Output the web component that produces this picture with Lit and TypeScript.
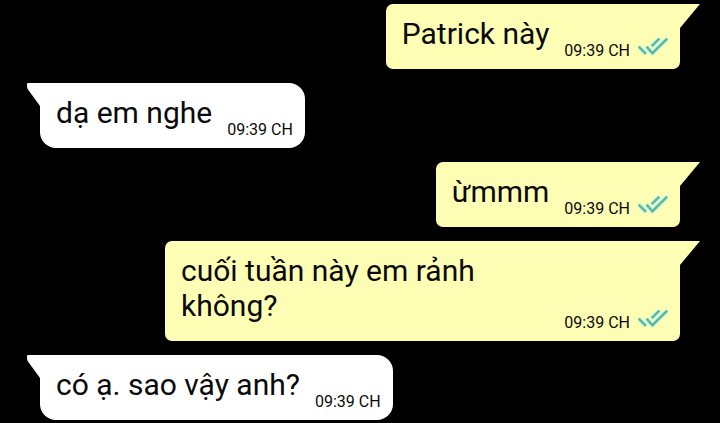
import { LitElement, html, css, nothing } from "lit";
import { customElement, property } from "lit/decorators.js";

interface Message {
  text: string;
  time: string;
  sent: boolean;
}

const messages: Message[] = [
  { text: "Patrick này", time: "09:39 CH", sent: true },
  { text: "dạ em nghe", time: "09:39 CH", sent: false },
  { text: "ừmmm", time: "09:39 CH", sent: true },
  { text: "cuối tuần này em rảnh không?", time: "09:39 CH", sent: true },
  { text: "có ạ. sao vậy anh?", time: "09:39 CH", sent: false },
];

@customElement("chat-bubble")
export class ChatBubble extends LitElement {
  @property() text = "";
  @property() time = "";
  @property({ type: Boolean, reflect: true }) sent = false;

  static styles = css`
    :host {
      display: flex;
      justify-content: flex-start;
    }
    :host([sent]) {
      justify-content: flex-end;
    }
    .bubble {
      position: relative;
      box-sizing: border-box;
      display: flex;
      align-items: flex-end;
      gap: 15px;
      max-width: calc(100% - 125px);
      padding: 0 12px 8px 16px;
      border-radius: 0 16px 16px 16px;
      background: #fff;
      color: #0a0a0a;
    }
    :host([sent]) .bubble {
      border-radius: 7px 0 7px 7px;
      background: #feffb5;
    }
    .text {
      flex: 1;
      margin: 0;
      padding: 12px 0 10px;
      font-size: 30px;
      line-height: 35px;
    }
    .meta {
      flex: none;
      display: flex;
      align-items: flex-end;
      gap: 8px;
      font-size: 16px;
      line-height: 20px;
      white-space: nowrap;
    }
    .ticks {
      display: block;
      width: 30px;
      height: 24px;
      fill: none;
      stroke: #58b5a8;
      stroke-width: 2.4;
    }
    .halo {
      stroke: #d2fbd3;
      stroke-width: 5;
    }
    .tail {
      position: absolute;
      top: 0;
      right: 100%;
      width: 13px;
      height: 23px;
      fill: #fff;
    }
    :host([sent]) .tail {
      right: auto;
      left: 100%;
      width: 20px;
      height: 24px;
      fill: #feffb5;
    }
  `;

  render() {
    const ticks = "M0.6 9.6L8 16.8M8.6 9.6L14.4 16.2L29.2 1.6M13.6 9.2L21.4 1.6";
    return html`
      <div class="bubble">
        ${this.sent
          ? html`<svg class="tail" viewBox="0 0 20 24" aria-hidden="true"><path d="M0 0H20L0 24Z" /></svg>`
          : html`<svg class="tail" viewBox="0 0 13 23" aria-hidden="true"><path d="M13 0H1Q0 0 0 1V3Q0 5 1 6.5L13 23Z" /></svg>`}
        <p class="text">${this.text}</p>
        <div class="meta">
          <time datetime="21:39">${this.time}</time>
          ${this.sent
            ? html`<svg class="ticks" viewBox="0 0 30 24" role="img" aria-label="Đã xem">
                <path class="halo" d=${ticks} />
                <path d=${ticks} />
              </svg>`
            : nothing}
        </div>
      </div>
    `;
  }
}

@customElement("app-root")
export class AppRoot extends LitElement {
  static styles = css`
    :host {
      display: block;
      box-sizing: border-box;
      min-height: 100vh;
      background: #000;
      font-family: Roboto, "Noto Sans", sans-serif;
    }
    .chat {
      display: flex;
      flex-direction: column;
      gap: 14px;
      padding: 4px 40px 3px;
    }
  `;

  render() {
    return html`
      <main class="chat">
        ${messages.map(
          (m) => html`<chat-bubble .text=${m.text} .time=${m.time} .sent=${m.sent}></chat-bubble>`
        )}
      </main>
    `;
  }
}
